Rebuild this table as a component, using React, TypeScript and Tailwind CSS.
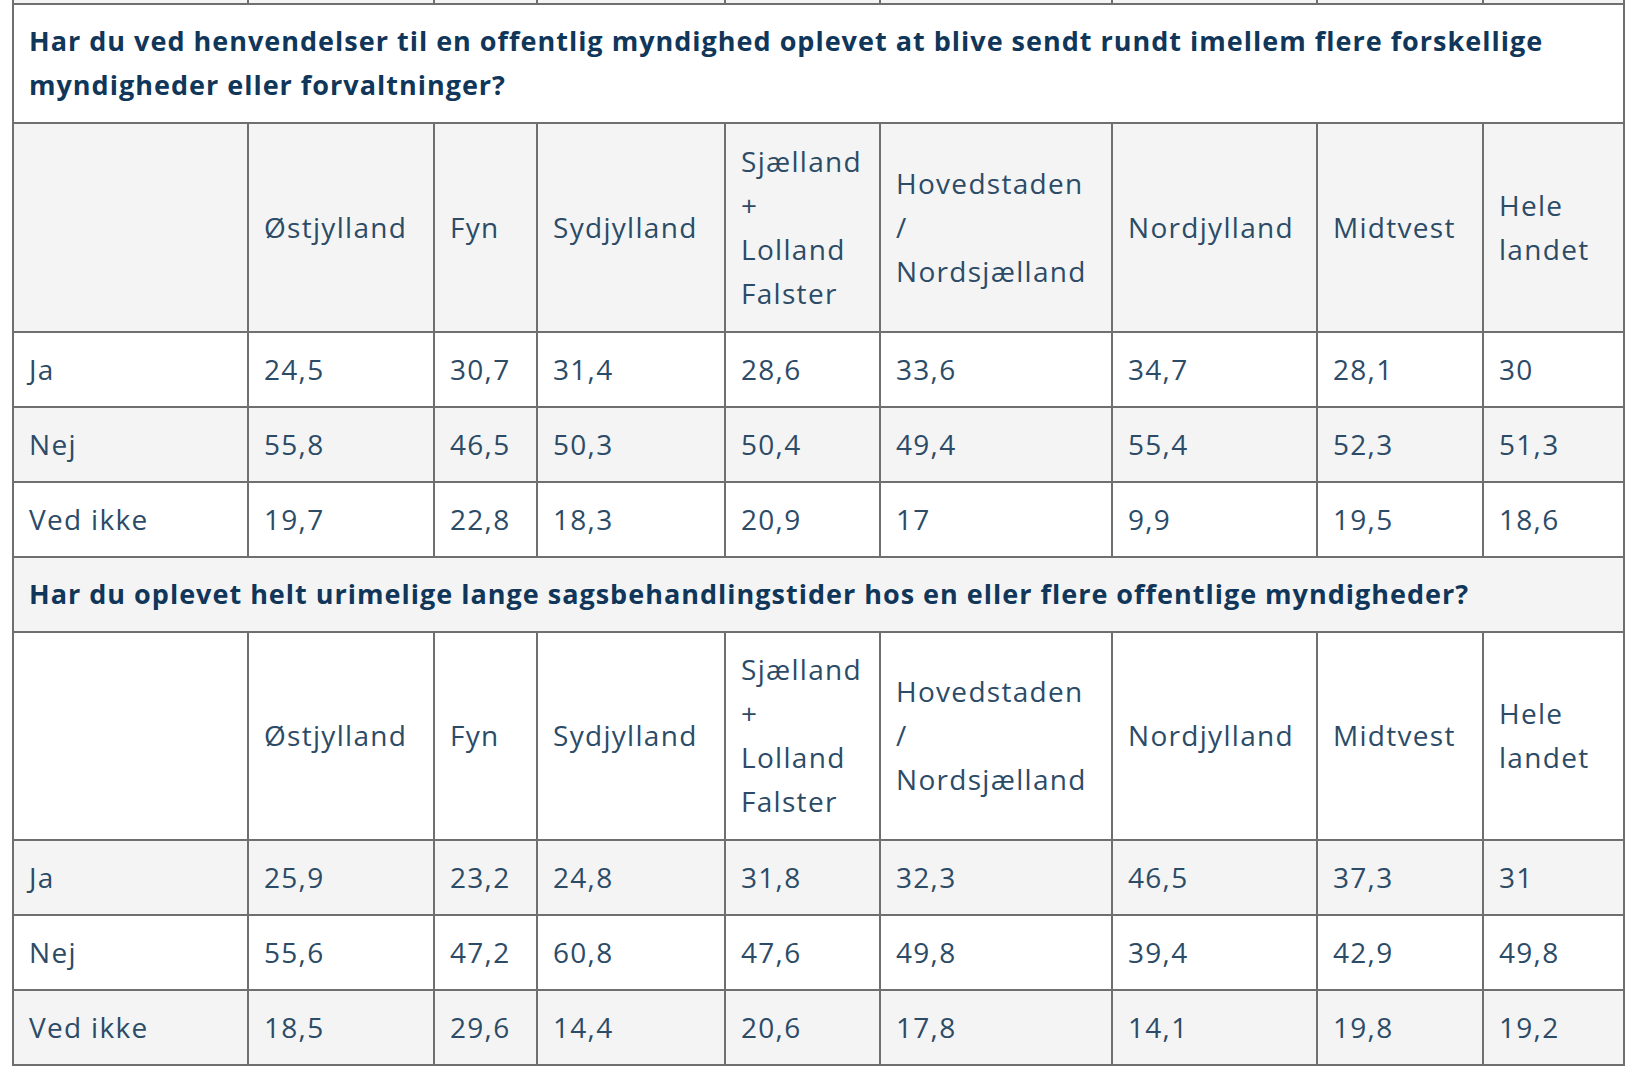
import React from "react";

type Section = {
  title: string;
  titleBg: string;
  headBg: string;
  rows: { label: string; values: string[]; bg: string }[];
};

const G = "bg-[#f4f4f4]";
const W = "bg-white";

const sections: Section[] = [
  {
    title:
      "Har du ved henvendelser til en offentlig myndighed oplevet at blive sendt rundt imellem flere forskellige myndigheder eller forvaltninger?",
    titleBg: W,
    headBg: G,
    rows: [
      { label: "Ja", values: ["24,5", "30,7", "31,4", "28,6", "33,6", "34,7", "28,1", "30"], bg: W },
      { label: "Nej", values: ["55,8", "46,5", "50,3", "50,4", "49,4", "55,4", "52,3", "51,3"], bg: G },
      { label: "Ved ikke", values: ["19,7", "22,8", "18,3", "20,9", "17", "9,9", "19,5", "18,6"], bg: W },
    ],
  },
  {
    title:
      "Har du oplevet helt urimelige lange sagsbehandlingstider hos en eller flere offentlige myndigheder?",
    titleBg: G,
    headBg: W,
    rows: [
      { label: "Ja", values: ["25,9", "23,2", "24,8", "31,8", "32,3", "46,5", "37,3", "31"], bg: G },
      { label: "Nej", values: ["55,6", "47,2", "60,8", "47,6", "49,8", "39,4", "42,9", "49,8"], bg: W },
      { label: "Ved ikke", values: ["18,5", "29,6", "14,4", "20,6", "17,8", "14,1", "19,8", "19,2"], bg: G },
    ],
  },
];

const cell = "border-2 border-[#6f6f6f] px-[15px] pt-[14px] pb-[15px] align-middle text-left font-normal";
const th = "border-2 border-[#6f6f6f] px-[15px] pt-[14.5px] pb-[16px] align-middle text-left font-normal";
const titleCell =
  "border-2 border-[#6f6f6f] px-[15px] pt-[14px] pb-[15px] align-middle text-left text-[27px] font-bold leading-[44px] tracking-[1px] text-[#10365a]";

function HeaderCells() {
  return (
    <>
      <th className={th}></th>
      <th className={th}>Østjylland</th>
      <th className={th}>Fyn</th>
      <th className={th}>Sydjylland</th>
      <th className={th}>
        Sjælland
        <br />+
        <br />
        Lolland
        <br />
        Falster
      </th>
      <th className={th}>
        Hovedstaden
        <br />/
        <br />
        Nordsjælland
      </th>
      <th className={th}>Nordjylland</th>
      <th className={th}>Midtvest</th>
      <th className={th}>
        Hele
        <br />
        landet
      </th>
    </>
  );
}

export default function App() {
  return (
    <div className="min-h-[1072px] w-full overflow-hidden bg-white">
      <table className="ml-[12px] mt-[-17px] w-[1611px] table-fixed border-collapse font-['Open_Sans',sans-serif] text-[28px] leading-[44px] tracking-[1.3px] text-[#2c4b67]">
        <colgroup>
          <col className="w-[235px]" />
          <col className="w-[186px]" />
          <col className="w-[103px]" />
          <col className="w-[188px]" />
          <col className="w-[155px]" />
          <col className="w-[232px]" />
          <col className="w-[205px]" />
          <col className="w-[166px]" />
          <col className="w-[141px]" />
        </colgroup>
        <tbody>
          <tr className={`${G} h-[20px]`}>
            {Array.from({ length: 9 }).map((_, i) => (
              <td key={i} className="border-2 border-[#6f6f6f] p-0"></td>
            ))}
          </tr>
          {sections.map((s, si) => (
            <React.Fragment key={si}>
              <tr className={s.titleBg}>
                <td colSpan={9} className={titleCell}>
                  {s.title}
                </td>
              </tr>
              <tr className={s.headBg}>
                <HeaderCells />
              </tr>
              {s.rows.map((r) => (
                <tr key={r.label} className={r.bg}>
                  <td className={cell}>{r.label}</td>
                  {r.values.map((v, i) => (
                    <td key={i} className={cell}>
                      {v}
                    </td>
                  ))}
                </tr>
              ))}
            </React.Fragment>
          ))}
        </tbody>
      </table>
    </div>
  );
}
